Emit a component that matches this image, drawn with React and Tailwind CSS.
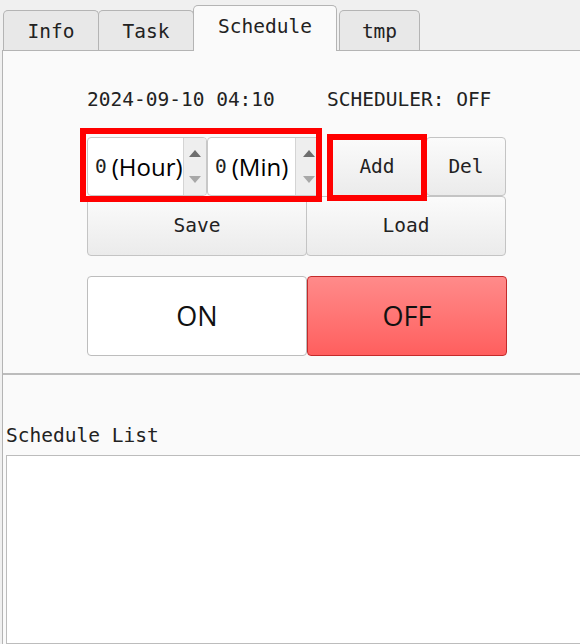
import React from "react";

const mono = "font-['DejaVu_Sans_Mono',monospace]";
const sans = "font-['Open_Sans',sans-serif]";

const Tab = ({ label, active, w }) => (
  <div
    className={`${w} flex items-center justify-center border border-b-0 border-[#b4b4b4] rounded-t-[5px] text-[19.5px] text-[#222] ${
      active ? "h-[46px] -mb-px relative z-10 bg-[#fafafa] pb-[4px]" : "h-[40px] bg-[#e8e8e8] pt-[3px]"
    }`}
  >
    {label}
  </div>
);

const Btn = ({ label, cls }) => (
  <div
    className={`${cls} flex items-center justify-center border border-[#c4c4c4] rounded-[4px] bg-gradient-to-b from-[#fbfbfb] to-[#ebebeb] text-[19.5px] text-[#222]`}
  >
    {label}
  </div>
);

const Spin = ({ unit, w }) => (
  <div className={`${w} h-full flex border border-[#c8c8c8] rounded-[4px] bg-white overflow-hidden`}>
    <div className="flex-1 flex items-center pl-[7px] gap-[5px]">
      <span className={`${mono} text-[19.5px] text-[#222]`}>0</span>
      <span className={`${sans} text-[24px] text-black leading-none`}>{unit}</span>
    </div>
    <div className="w-[26px] flex flex-col items-center justify-between py-[12px] border-l border-[#d4d4d4] bg-[#eeeeee]">
      <svg width="12" height="7" viewBox="0 0 12 7">
        <path d="M0 7 L6 0 L12 7 Z" fill="#6e6e6e" />
      </svg>
      <svg width="12" height="7" viewBox="0 0 12 7">
        <path d="M0 0 L6 7 L12 0 Z" fill="#a8a8a8" />
      </svg>
    </div>
  </div>
);

const App = () => {
  return (
    <div className={`relative w-[580px] h-[644px] bg-[#f0f0f0] overflow-hidden flex flex-col ${mono}`}>
      {/* tabs */}
      <div className="flex items-end pl-[3px] h-[50px]">
        <Tab label="Info" w="w-[96px]" />
        <Tab label="Task" w="w-[96px] -ml-px" />
        <Tab label="Schedule" active w="w-[144px] -ml-px" />
        <Tab label="tmp" w="w-[81px] ml-[2px]" />
      </div>

      {/* panel */}
      <div className="flex-1 ml-[2px] border-l border-t border-[#b4b4b4] bg-[#fafafa] flex flex-col">
        <div className="pl-[84px] mt-[37px] h-[24px] flex items-center text-[19.5px] text-[#222]">
          <span className="w-[240px]">2024-09-10 04:10</span>
          <span>SCHEDULER: OFF</span>
        </div>

        <div className="ml-[84px] w-[420px] mt-[25px] flex flex-col">
          <div className="h-[59px] flex">
            <Spin unit="(Hour)" w="w-[120px]" />
            <Spin unit="(Min)" w="w-[115px]" />
            <Btn label="Add" cls="w-[100px] ml-[5px] h-full" />
            <Btn label="Del" cls="w-[80px] -ml-px h-full" />
          </div>
          <div className="h-[60px] flex">
            <Btn label="Save" cls="w-[220px] h-full" />
            <Btn label="Load" cls="w-[200px] -ml-px h-full" />
          </div>
          <div className="h-[80px] mt-[20px] flex">
            <div className={`w-[220px] h-full flex items-center justify-center bg-white border border-[#bdbdbd] rounded-[4px] ${sans} text-[27px] text-[#111]`}>
              ON
            </div>
            <div className={`w-[200px] h-full flex items-center justify-center bg-gradient-to-b from-[#ff8a8a] to-[#ff5e5e] border border-[#c42a2a] rounded-[4px] ${sans} text-[27px] text-[#111]`}>
              OFF
            </div>
          </div>
        </div>

        <div className="mt-[17px] h-[2px] bg-[#bcbcbc]" />

        <div className="mt-[49px] pl-[3px] h-[24px] flex items-center text-[19.5px] text-[#222]">
          Schedule List
        </div>
        <div className="mt-[7px] ml-[3px] w-[580px] flex-1 bg-white border border-[#bcbcbc]" />
      </div>

      {/* red highlight boxes */}
      <div className="absolute left-[80px] top-[128px] w-[242px] h-[74px] border-[6px] border-[#ff0000] pointer-events-none" />
      <div className="absolute left-[327px] top-[134px] w-[100px] h-[67px] border-[6px] border-[#ff0000] pointer-events-none" />
    </div>
  );
};

export default App;
